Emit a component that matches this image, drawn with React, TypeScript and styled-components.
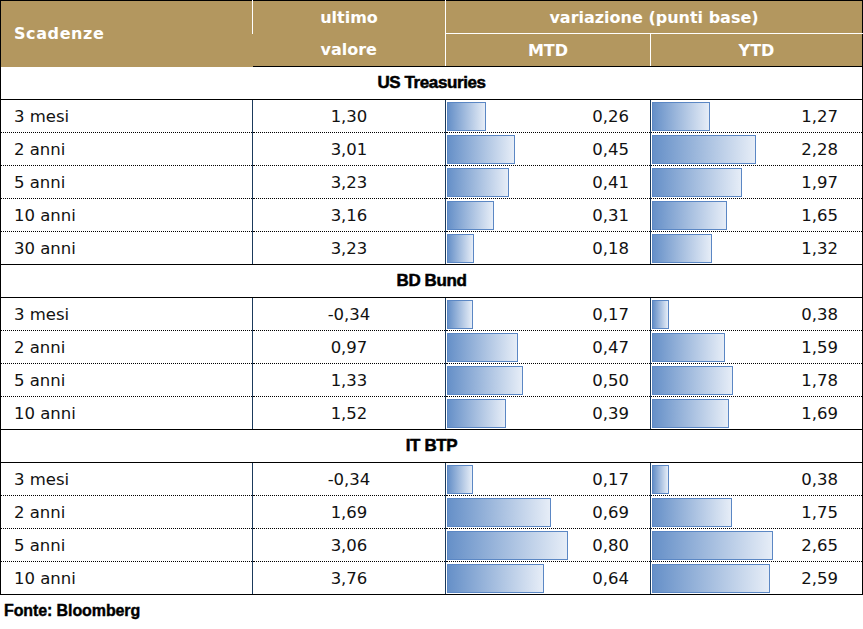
import * as React from 'react';
import styled, {createGlobalStyle} from 'styled-components';

const GlobalStyle = createGlobalStyle`
  html, body {
    margin: 0;
    padding: 0;
    background: #fff;
  }
`;

const Page = styled.div`
  width: 863px;
  font-family: "DejaVu Sans", "Liberation Sans", sans-serif;
  color: #111;
`;

const Table = styled.table`
  border-collapse: collapse;
  table-layout: fixed;
  width: 862px;
  border: 1px solid #000;
`;

const HeadCell = styled.th<{$align?: 'left' | 'center'; $divider?: boolean}>`
  background: #b3975f;
  color: #fff;
  font-weight: bold;
  font-size: 16px;
  height: 32px;
  padding: 0 0 0 ${p => (p.$align === 'left' ? '13px' : '0')};
  text-align: ${p => p.$align || 'center'};
  letter-spacing: ${p => (p.$align === 'left' ? '0.6px' : '0')};
  border-left: 1px solid #fff;
  border-bottom: ${p => (p.$divider ? '1px solid #fff' : 'none')};
  &:first-child {
    border-left: none;
  }
`;

const HeadRow = styled.tr`
  &:last-child th {
    border-bottom: 1px solid #000;
  }
`;

const SectionCell = styled.td`
  height: 32px;
  padding: 0;
  text-align: center;
  font-family: "Liberation Sans", Arial, sans-serif;
  font-weight: bold;
  font-size: 17px;
  letter-spacing: -0.4px;
  -webkit-text-stroke: 0.5px #000;
  color: #000;
  border-bottom: 1px solid #000;
`;

const Cell = styled.td<{$last?: boolean}>`
  height: 32px;
  padding: 0;
  font-size: 16.5px;
  border-bottom: 1px ${p => (p.$last ? 'solid #000' : 'dotted #000')};
  border-left: 1px solid #1b3a5c;
  &:first-child {
    border-left: 1px solid #000;
  }
`;

const Label = styled.div`
  padding-left: 13px;
`;

const Value = styled.div`
  text-align: center;
`;

const BarCell = styled.div<{$pad: number}>`
  display: flex;
  align-items: center;
  justify-content: space-between;
  padding: 0 ${p => p.$pad}px 0 1px;
`;

const Bar = styled.div`
  box-sizing: border-box;
  height: 29px;
  border: 1px solid #5b87c4;
  background: linear-gradient(to right, #6690c8, #e6edf7);
`;

const Number = styled.span``;

const Footer = styled.div`
  margin-top: 7px;
  padding-left: 4px;
  font-family: "Liberation Sans", Arial, sans-serif;
  font-weight: bold;
  font-size: 16px;
  letter-spacing: -0.1px;
  -webkit-text-stroke: 0.4px #000;
  color: #000;
`;

type Row = [string, string, string, string];

const sections: {title: string; rows: Row[]}[] = [
  {
    title: 'US Treasuries',
    rows: [
      ['3 mesi', '1,30', '0,26', '1,27'],
      ['2 anni', '3,01', '0,45', '2,28'],
      ['5 anni', '3,23', '0,41', '1,97'],
      ['10 anni', '3,16', '0,31', '1,65'],
      ['30 anni', '3,23', '0,18', '1,32'],
    ],
  },
  {
    title: 'BD Bund',
    rows: [
      ['3 mesi', '-0,34', '0,17', '0,38'],
      ['2 anni', '0,97', '0,47', '1,59'],
      ['5 anni', '1,33', '0,50', '1,78'],
      ['10 anni', '1,52', '0,39', '1,69'],
    ],
  },
  {
    title: 'IT BTP',
    rows: [
      ['3 mesi', '-0,34', '0,17', '0,38'],
      ['2 anni', '1,69', '0,69', '1,75'],
      ['5 anni', '3,06', '0,80', '2,65'],
      ['10 anni', '3,76', '0,64', '2,59'],
    ],
  },
];

const toNum = (s: string) => parseFloat(s.replace(',', '.'));
const all = sections.flatMap(s => s.rows);
const maxMtd = Math.max(...all.map(r => toNum(r[2])));
const maxYtd = Math.max(...all.map(r => toNum(r[3])));
const BAR_MAX = 121;

const BarValue = ({value, max, pad}: {value: string; max: number; pad: number}) => (
  <BarCell $pad={pad}>
    <Bar style={{width: Math.round((toNum(value) / max) * BAR_MAX)}} />
    <Number>{value}</Number>
  </BarCell>
);

export default function App() {
  return (
    <Page>
      <GlobalStyle />
      <Table>
        <colgroup>
          <col style={{width: 252}} />
          <col style={{width: 193}} />
          <col style={{width: 205}} />
          <col style={{width: 212}} />
        </colgroup>
        <thead>
          <HeadRow>
            <HeadCell rowSpan={2} $align='left'>Scadenze</HeadCell>
            <HeadCell>ultimo</HeadCell>
            <HeadCell colSpan={2} $divider>variazione (punti base)</HeadCell>
          </HeadRow>
          <HeadRow>
            <HeadCell>valore</HeadCell>
            <HeadCell>MTD</HeadCell>
            <HeadCell>YTD</HeadCell>
          </HeadRow>
        </thead>
        <tbody>
          {sections.map(section => (
            <React.Fragment key={section.title}>
              <tr>
                <SectionCell colSpan={4}>{section.title}</SectionCell>
              </tr>
              {section.rows.map((row, i) => {
                const last = i === section.rows.length - 1;
                return (
                  <tr key={row[0]}>
                    <Cell $last={last}><Label>{row[0]}</Label></Cell>
                    <Cell $last={last}><Value>{row[1]}</Value></Cell>
                    <Cell $last={last}><BarValue value={row[2]} max={maxMtd} pad={21} /></Cell>
                    <Cell $last={last}><BarValue value={row[3]} max={maxYtd} pad={24} /></Cell>
                  </tr>
                );
              })}
            </React.Fragment>
          ))}
        </tbody>
      </Table>
      <Footer>Fonte: Bloomberg</Footer>
    </Page>
  );
}
